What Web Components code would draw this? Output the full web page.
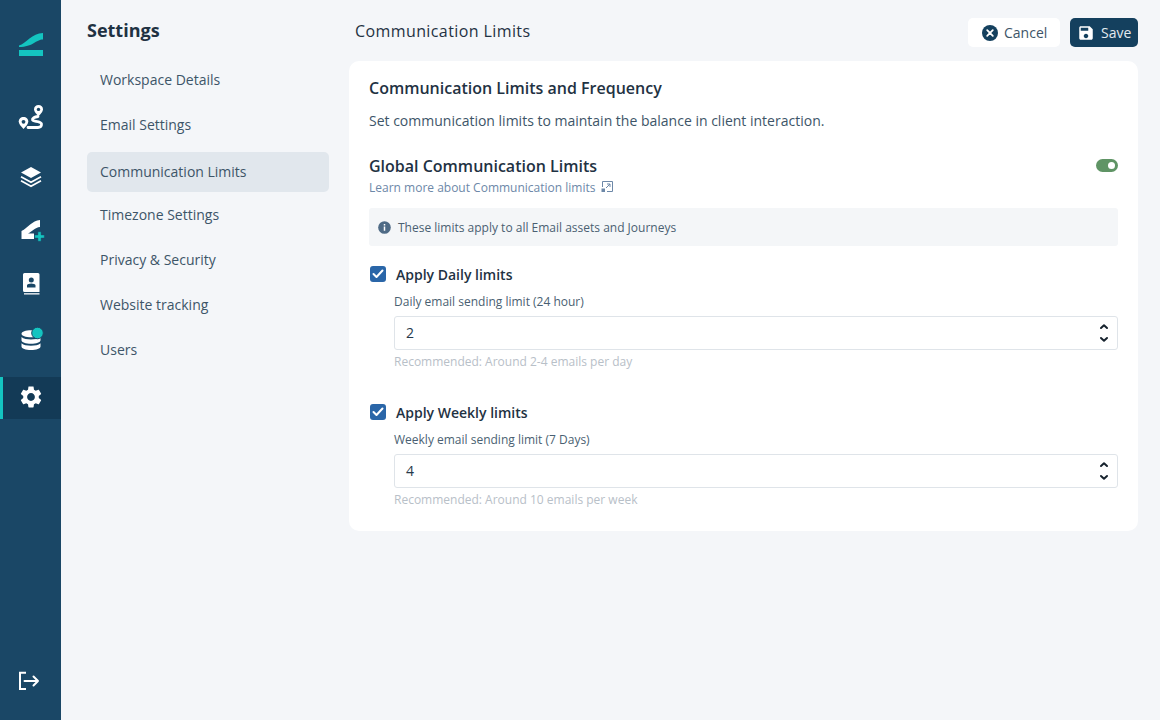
<!DOCTYPE html>
<html lang="en">
<head>
<meta charset="utf-8">
<title>Communication Limits</title>
<style>
  html, body { margin: 0; height: 100%; }
  body { background: #f4f6f9; font-family: "Open Sans", "Noto Sans", sans-serif; color: #1f3243; }
</style>
</head>
<body>

<app-shell>
  <app-rail slot="rail">
    <rail-item style="height:42px;margin:24px 0 31px">
      <svg width="26" height="26" viewBox="0 0 26 26"><path fill="#14c4c0" d="M1 13.500C8 11.500 14 1 25 1v6.500C18 7.500 15 15 1 15zM1 18h24v6H1z"/></svg>
    </rail-item>
    <rail-item>
      <svg width="26" height="26" viewBox="0 0 26 26"><path fill="none" stroke="#fff" stroke-width="2.800" stroke-linecap="round" d="M20 11.500c-3.500.5-6 1.500-5.500 3.500s8.500.5 9 4c.3 2.500-1.500 3.500-3.500 3.500H10"/><path fill="#fff" d="M5.500 12c2.800 0 4.800 2.100 4.800 4.600 0 2.400-2.400 5-4.800 7.400-2.400-2.400-4.800-5-4.800-7.400C.7 14.100 2.700 12 5.500 12z"/><path fill="#fff" d="M20.500 0c2.600 0 4.500 1.900 4.500 4.300 0 2.300-2.200 4.700-4.500 7-2.300-2.300-4.500-4.700-4.500-7C16 1.900 17.900 0 20.500 0z"/><circle cx="5.500" cy="16.800" r="1.900" fill="#1a4766"/><circle cx="20.500" cy="4.400" r="1.700" fill="#1a4766"/></svg>
    </rail-item>
    <rail-item style="margin-top:16px">
      <svg width="24" height="24" viewBox="0 0 24 24"><path fill="#fff" d="M12 3 22 8.500 12 14 2 8.500z"/><path fill="none" stroke="#fff" stroke-width="1.700" stroke-linejoin="round" d="M2 12.800l10 5.500 10-5.500M2 16.800l10 5.500 10-5.500"/></svg>
    </rail-item>
    <rail-item style="margin-top:13px">
      <svg width="28" height="26" viewBox="0 0 28 26"><path fill="#fff" d="M4.500 13C11 10 15 2.500 23 2v7c-5 .5-8 4.500-12 6.500h6V21H4.500z"/><path fill="#14c4c0" stroke="#1a4766" stroke-width=".5" d="M20.900 13.700h3.200v3.200h3.200v3.200h-3.200v3.200h-3.200v-3.200h-3.200v-3.200h3.200z"/></svg>
    </rail-item>
    <rail-item style="margin-top:11px">
      <svg width="24" height="24" viewBox="0 0 24 24"><path fill="#fff" fill-rule="evenodd" d="M5.500 1h13.500a1.500 1.500 0 0 1 1.500 1.500V20H5.500A1.500 1.500 0 0 1 4 18.500v-16A1.500 1.500 0 0 1 5.500 1zM12.300 5.500a2.500 2.500 0 1 0 0 5 2.500 2.500 0 0 0 0-5zM8 13.300v2.200h8.500v-2.200c0-1-2.500-1.800-4.250-1.800S8 12.300 8 13.300z"/><path fill="#fff" d="M5 21.200h15.500v1.300H5z"/></svg>
    </rail-item>
    <rail-item style="margin-top:13px">
      <svg width="28" height="28" viewBox="0 0 28 28"><g fill="#fff" transform="translate(2.500 -1)"><path d="M2 9.800c0-2 4.200-3.500 9.500-3.500s9.500 1.500 9.500 3.500-4.200 3.500-9.500 3.500S2 11.800 2 9.800z"/><path d="M2 13c2 1.800 5.500 2.500 9.500 2.500S19 14.800 21 13v3.200c0 2-4.200 3.500-9.500 3.500S2 18.200 2 16.200z"/><path d="M2 19.200c2 1.800 5.500 2.500 9.500 2.500s7.500-.7 9.500-2.500v3.200c0 2-4.200 3.500-9.500 3.500S2 24.400 2 22.400z"/></g><circle cx="20.500" cy="8" r="5.800" fill="#14c4c0" stroke="#1a4766"/></svg>
    </rail-item>
    <rail-item active style="margin-top:17px">
      <svg style="margin-bottom:2px" width="26" height="26" viewBox="0 0 24 24"><path fill="#fff" d="M19.140,12.940c0.040-0.300,0.060-0.610,0.060-0.940c0-0.320-0.020-0.640-0.070-0.940l2.030-1.580c0.180-0.140,0.230-0.410,0.120-0.610l-1.920-3.320c-0.120-0.220-0.370-0.290-0.590-0.220l-2.390,0.960c-0.500-0.380-1.030-0.700-1.620-0.940L14.400,2.810c-0.040-0.240-0.240-0.410-0.480-0.410h-3.840c-0.240,0-0.430,0.170-0.470,0.410L9.250,5.350C8.660,5.590,8.120,5.920,7.630,6.290L5.240,5.330c-0.220-0.080-0.470,0-0.590,0.220L2.740,8.870C2.620,9.080,2.660,9.340,2.860,9.480l2.030,1.580C4.840,11.360,4.800,11.690,4.800,12s0.020,0.640,0.070,0.940l-2.030,1.580c-0.180,0.140-0.230,0.410-0.120,0.610l1.920,3.320c0.120,0.220,0.370,0.290,0.590,0.220l2.390-0.960c0.500,0.380,1.030,0.700,1.620,0.940l0.360,2.540c0.050,0.240,0.240,0.410,0.480,0.410h3.840c0.240,0,0.440-0.170,0.470-0.410l0.360-2.540c0.590-0.240,1.130-0.560,1.620-0.940l2.390,0.960c0.220,0.080,0.470,0,0.590-0.220l1.920-3.320c0.120-0.220,0.070-0.470-0.120-0.610L19.140,12.940z M12,15.600c-1.980,0-3.600-1.620-3.600-3.600s1.620-3.600,3.600-3.600s3.600,1.620,3.600,3.600S13.980,15.600,12,15.600z"/></svg>
    </rail-item>
    <rail-item style="margin-top:auto;margin-bottom:18px">
      <svg width="24" height="24" viewBox="0 0 24 24"><path fill="none" stroke="#fff" stroke-width="2" d="M7 3.700H1v16.300h6"/><path fill="none" stroke="#fff" stroke-width="2" stroke-linecap="round" stroke-linejoin="round" d="M5.500 12h13.500M14.500 7.500L19 12l-4.500 4.500"/></svg>
    </rail-item>
  </app-rail>

  <settings-nav slot="nav">
    <nav-item>Workspace Details</nav-item>
    <nav-item>Email Settings</nav-item>
    <nav-item active>Communication Limits</nav-item>
    <nav-item>Timezone Settings</nav-item>
    <nav-item>Privacy &amp; Security</nav-item>
    <nav-item>Website tracking</nav-item>
    <nav-item>Users</nav-item>
  </settings-nav>

  <page-head heading="Communication Limits">
    <app-button style="width:92px">
      <svg slot="icon" width="18" height="18" viewBox="0 0 18 18"><circle cx="9" cy="9" r="8" fill="#14405e"/><path d="M6.200 6.200l5.600 5.600M11.800 6.200l-5.600 5.600" stroke="#fff" stroke-width="1.800" stroke-linecap="round"/></svg>
      Cancel
    </app-button>
    <app-button primary style="width:68px">
      <svg slot="icon" width="18" height="18" viewBox="0 0 24 24"><path fill="#fff" d="M17 3H5c-1.110 0-2 .900-2 2v14c0 1.100.890 2 2 2h14c1.100 0 2-.900 2-2V7l-4-4zm-5 16c-1.660 0-3-1.340-3-3s1.340-3 3-3 3 1.340 3 3-1.340 3-3 3zm3-10H5V5h10v4z"/></svg>
      Save
    </app-button>
  </page-head>

  <limits-card>
    <limit-field label="Apply Daily limits" caption="Daily email sending limit (24 hour)" value="2" hint="Recommended: Around 2-4 emails per day"></limit-field>
    <limit-field label="Apply Weekly limits" caption="Weekly email sending limit (7 Days)" value="4" hint="Recommended: Around 10 emails per week"></limit-field>
  </limits-card>
</app-shell>

<script>
  class AppShell extends HTMLElement {
    constructor() {
      super()
      this.attachShadow({ mode: 'open' }).innerHTML = `
        <style>
          :host { display: flex; width: 1160px; height: 720px; overflow: hidden; }
          main { flex: 1; display: flex; flex-direction: column; min-width: 0; padding: 0 22px 0 0; }
        </style>
        <slot name="rail"></slot>
        <slot name="nav"></slot>
        <main><slot></slot></main>`
    }
  }

  class AppRail extends HTMLElement {
    constructor() {
      super()
      this.attachShadow({ mode: 'open' }).innerHTML = `
        <style>
          :host { display: flex; flex-direction: column; flex: none; width: 61px; height: 720px; background: #1a4766; }
        </style>
        <slot></slot>`
    }
  }

  class RailItem extends HTMLElement {
    constructor() {
      super()
      this.attachShadow({ mode: 'open' }).innerHTML = `
        <style>
          :host { display: flex; align-items: center; justify-content: center; flex: none; height: 42px; box-sizing: border-box; }
          :host([active]) { background: #133a56; border-left: 3px solid #14c4c0; padding-right: 3px; }
        </style>
        <slot></slot>`
    }
  }

  class SettingsNav extends HTMLElement {
    constructor() {
      super()
      this.attachShadow({ mode: 'open' }).innerHTML = `
        <style>
          :host { display: flex; flex-direction: column; flex: none; width: 242px; box-sizing: content-box; padding: 0 20px 0 26px; }
          h2 { margin: 18px 0 17px; font-size: 18px; line-height: 25px; font-weight: 700; color: #1f3243; }
          .list { display: flex; flex-direction: column; gap: 5px; }
        </style>
        <h2>Settings</h2>
        <div class="list"><slot></slot></div>`
    }
  }

  class NavItem extends HTMLElement {
    constructor() {
      super()
      this.attachShadow({ mode: 'open' }).innerHTML = `
        <style>
          :host { display: flex; align-items: center; box-sizing: border-box; height: 40px; padding: 0 13px 2px; border-radius: 5px; font-size: 14px; color: #3d5568; }
          :host([active]) { background: #e1e7ed; margin: 2px 0 -2px; }
        </style>
        <slot></slot>`
    }
  }

  class PageHead extends HTMLElement {
    constructor() {
      super()
      this.attachShadow({ mode: 'open' }).innerHTML = `
        <style>
          :host { display: flex; align-items: center; height: 29px; margin: 18px 0 14px; padding-left: 6px; }
          h1 { flex: 1; margin: 0 0 3px; font-size: 16px; font-weight: 500; letter-spacing: .4px; color: #1f3243; }
          div { display: flex; gap: 10px; }
        </style>
        <h1></h1>
        <div><slot></slot></div>`
      this.shadowRoot.querySelector('h1').textContent = this.getAttribute('heading')
    }
  }

  class AppButton extends HTMLElement {
    constructor() {
      super()
      this.attachShadow({ mode: 'open' }).innerHTML = `
        <style>
          :host { display: flex; align-items: center; gap: 5px; box-sizing: border-box; height: 29px; padding-left: 13px; border-radius: 5px; background: #fff; color: #3d5568; font-size: 14px; }
          :host([primary]) { background: #14405e; color: #e4ebf0; padding-left: 7px; gap: 6px; }
          ::slotted(svg) { flex: none; }
        </style>
        <slot name="icon"></slot><slot></slot>`
    }
  }

  class LimitsCard extends HTMLElement {
    constructor() {
      super()
      this.attachShadow({ mode: 'open' }).innerHTML = `
        <style>
          :host { display: block; box-sizing: border-box; height: 470px; padding: 16px 20px 0; background: #fff; border-radius: 10px; }
          h3 { margin: 0; font-size: 16px; line-height: 22px; font-weight: 600; color: #1f3243; }
          p { margin: 11px 0 0; font-size: 14px; line-height: 22px; color: #3d5568; }
          .global { display: flex; justify-content: space-between; align-items: flex-start; margin-top: 23px; }
          h4 { margin: 0; font-size: 16px; line-height: 23px; font-weight: 600; color: #1f3243; }
          a { display: flex; align-items: center; gap: 6px; margin-top: 1px; font-size: 12px; line-height: 18px; color: #6d88a8; }
          a svg { margin-bottom: 2px; }
          .tog { width: 22px; height: 13px; margin-top: 4px; border-radius: 7px; background: #5f9465; display: flex; justify-content: flex-end; align-items: center; padding-right: 3px; box-sizing: border-box; }
          .tog i { width: 7px; height: 7px; border-radius: 50%; background: #fff; }
          .note { display: flex; align-items: center; gap: 7px; height: 38px; margin-top: 11px; padding-left: 9px; border-radius: 3px; background: #f4f6f8; font-size: 12px; color: #4a5f72; }
        </style>
        <h3>Communication Limits and Frequency</h3>
        <p>Set communication limits to maintain the balance in client interaction.</p>
        <div class="global">
          <div>
            <h4>Global Communication Limits</h4>
            <a>Learn more about Communication limits
              <svg width="12" height="12" viewBox="0 0 12 12" fill="none" stroke="#6d88a8" stroke-width="1"><path d="M1.500 6V.5h10v10H6M5 7l4-4M6 3h3v3"/><rect x=".5" y="7.500" width="3.500" height="3.500" fill="#6d88a8" stroke="none"/></svg>
            </a>
          </div>
          <div class="tog"><i></i></div>
        </div>
        <div class="note">
          <svg width="13" height="13" viewBox="0 0 14 14"><circle cx="7" cy="7" r="6.800" fill="#4f6b86"/><path d="M6.200 6h1.600v4.500H6.200zM6.200 3.300h1.600v1.600H6.200z" fill="#fff"/></svg>
          These limits apply to all Email assets and Journeys
        </div>
        <slot></slot>`
    }
  }

  class LimitField extends HTMLElement {
    constructor() {
      super()
      this.attachShadow({ mode: 'open' }).innerHTML = `
        <style>
          :host { display: block; margin-top: 17px; margin-bottom: 30px; }
          .check { display: flex; align-items: center; gap: 10px; margin-left: 1px; height: 22px; font-size: 14px; font-weight: 600; color: #1f3243; }
          .box { width: 16px; height: 16px; border-radius: 3px; background: #2a66a8; display: flex; align-items: center; justify-content: center; }
          .body { margin-left: 25px; }
          .cap { margin-top: 8px; font-size: 12px; line-height: 18px; color: #4a5f72; }
          .input { display: flex; align-items: center; justify-content: space-between; box-sizing: border-box; height: 34px; margin-top: 5px; padding: 0 8px 0 11px; border: 1px solid #dfe4e9; border-radius: 3px; font-size: 14px; color: #26394a; background: #fff; }
          .val { margin-bottom: 2px; }
          .hint { margin-top: 3px; font-size: 12px; line-height: 18px; color: #b8c0c8; }
        </style>
        <div class="check">
          <span class="box"><svg width="12" height="10" viewBox="0 0 12 10" fill="none" stroke="#fff" stroke-width="2" stroke-linecap="round" stroke-linejoin="round"><path d="M1.500 5l3 3 6-6.500"/></svg></span>
          <span class="label"></span>
        </div>
        <div class="body">
          <div class="cap"></div>
          <div class="input"><span class="val"></span>
            <svg width="10" height="24" viewBox="0 0 10 24" fill="none" stroke="#16222d" stroke-width="2" stroke-linecap="round" stroke-linejoin="round"><path d="M2 7l3-2.700L8 7M2 17l3 2.700L8 17"/></svg>
          </div>
          <div class="hint"></div>
        </div>`
      const $ = s => this.shadowRoot.querySelector(s)
      $('.label').textContent = this.getAttribute('label')
      $('.cap').textContent = this.getAttribute('caption')
      $('.val').textContent = this.getAttribute('value')
      $('.hint').textContent = this.getAttribute('hint')
    }
  }

  customElements.define('app-shell', AppShell)
  customElements.define('app-rail', AppRail)
  customElements.define('rail-item', RailItem)
  customElements.define('settings-nav', SettingsNav)
  customElements.define('nav-item', NavItem)
  customElements.define('page-head', PageHead)
  customElements.define('app-button', AppButton)
  customElements.define('limits-card', LimitsCard)
  customElements.define('limit-field', LimitField)
</script>
</body>
</html>
